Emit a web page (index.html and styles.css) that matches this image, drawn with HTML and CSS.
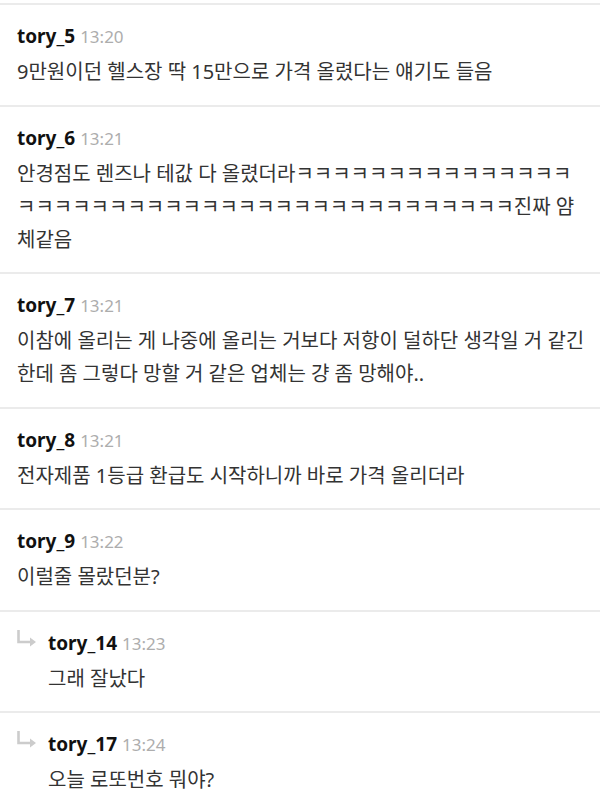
FILE: index.html
```html
<!DOCTYPE html>
<html lang="ko">
<head>
    <meta charset="UTF-8">
    <meta name="viewport" content="width=device-width, initial-scale=1.0">
    <title>댓글</title>
    <link rel="stylesheet" href="styles.css">
</head>
<body>
    <div class="comment-list">
        <!-- tory_5 -->
        <div class="comment">
            <div class="comment-head">
                <span class="nick">tory_5</span>
                <span class="time">13:20</span>
            </div>
            <div class="comment-text">9만원이던 헬스장 딱 15만으로 가격 올렸다는 얘기도 들음</div>
        </div>

        <!-- tory_6 -->
        <div class="comment">
            <div class="comment-head">
                <span class="nick">tory_6</span>
                <span class="time">13:21</span>
            </div>
            <div class="comment-text">안경점도 렌즈나 테값 다 올렸더라ㅋㅋㅋㅋㅋㅋㅋㅋㅋㅋㅋㅋㅋㅋㅋㅋㅋㅋㅋㅋㅋㅋㅋㅋㅋㅋㅋㅋㅋㅋㅋㅋㅋㅋㅋㅋㅋㅋㅋㅋㅋㅋ진짜 얌체같음</div>
        </div>

        <!-- tory_7 -->
        <div class="comment">
            <div class="comment-head">
                <span class="nick">tory_7</span>
                <span class="time">13:21</span>
            </div>
            <div class="comment-text">이참에 올리는 게 나중에 올리는 거보다 저항이 덜하단 생각일 거 같긴한데 좀 그렇다 망할 거 같은 업체는 걍 좀 망해야..</div>
        </div>

        <!-- tory_8 -->
        <div class="comment">
            <div class="comment-head">
                <span class="nick">tory_8</span>
                <span class="time">13:21</span>
            </div>
            <div class="comment-text">전자제품 1등급 환급도 시작하니까 바로 가격 올리더라</div>
        </div>

        <!-- tory_9 -->
        <div class="comment">
            <div class="comment-head">
                <span class="nick">tory_9</span>
                <span class="time">13:22</span>
            </div>
            <div class="comment-text">이럴줄 몰랐던분?</div>
        </div>

        <!-- replies -->
        <div class="comment reply">
            <svg class="reply-icon" width="20" height="18" viewBox="0 0 20 18">
                <path d="M1.5 0 V12 H14" fill="none" stroke="#cccccc" stroke-width="2.6"/>
                <polygon points="13,7.5 19,12 13,16.5" fill="#cccccc"/>
            </svg>
            <div class="reply-body">
                <div class="comment-head">
                    <span class="nick">tory_14</span>
                    <span class="time">13:23</span>
                </div>
                <div class="comment-text">그래 잘났다</div>
            </div>
        </div>

        <div class="comment reply">
            <svg class="reply-icon" width="20" height="18" viewBox="0 0 20 18">
                <path d="M1.5 0 V12 H14" fill="none" stroke="#cccccc" stroke-width="2.6"/>
                <polygon points="13,7.5 19,12 13,16.5" fill="#cccccc"/>
            </svg>
            <div class="reply-body">
                <div class="comment-head">
                    <span class="nick">tory_17</span>
                    <span class="time">13:24</span>
                </div>
                <div class="comment-text">오늘 로또번호 뭐야?</div>
            </div>
        </div>
    </div>
</body>
</html>
```

FILE: styles.css
```css
/* Page */
body {
    margin: 0;
    padding: 0;
    background-color: #fff;
    font-family: "Noto Sans", "Noto Sans CJK KR", sans-serif;
    color: #333;
}

.comment-list {
    padding-top: 3px;
}

/* One comment row */
.comment {
    border-top: 2px solid #ebebeb;
    padding: 18px 13px 16.5px 17px;
}

.comment-head {
    display: flex;
    align-items: baseline;
    gap: 5px;
    line-height: 26px;
    margin-bottom: 5px;
}

.nick {
    font-size: 19px;
    font-weight: bold;
    color: #111;
}

.time {
    font-size: 17px;
    color: #adadad;
}

.comment-text {
    font-size: 20px;
    line-height: 33px;
    color: #333;
}

/* Replies */
.reply {
    display: flex;
    align-items: flex-start;
}

.reply-icon {
    flex-shrink: 0;
    margin-right: 11px;
}

.reply-body {
    flex-grow: 1;
}
```
